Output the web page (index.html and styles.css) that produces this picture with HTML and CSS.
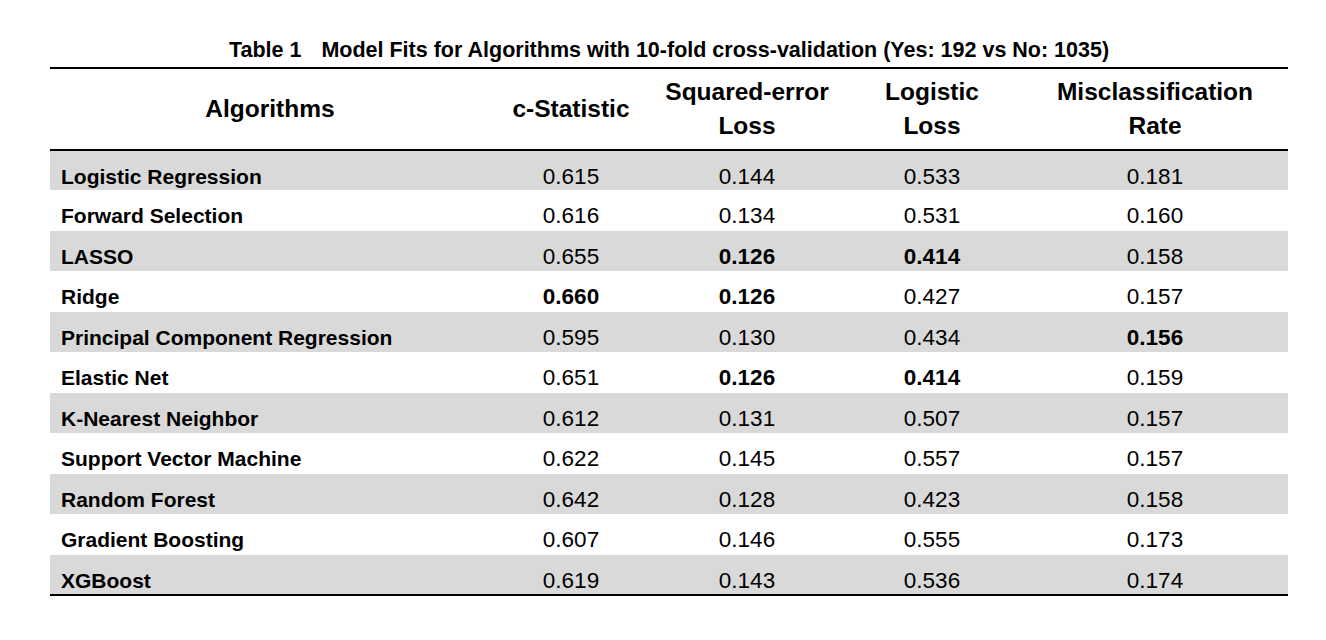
FILE: index.html
```html
<!DOCTYPE html>
<html>
<head>
<meta charset="utf-8">
<link rel="stylesheet" href="styles.css">
</head>
<body>
<div class="page">
  <div class="caption"><span class="label">Table 1</span>Model Fits for Algorithms with 10-fold cross-validation (Yes: 192 vs No: 1035)</div>
  <table class="fits">
    <colgroup>
      <col class="c1"><col class="c2"><col class="c3"><col class="c4"><col class="c5">
    </colgroup>
    <thead>
      <tr>
        <th>Algorithms</th>
        <th>c-Statistic</th>
        <th>Squared-error<br>Loss</th>
        <th>Logistic<br>Loss</th>
        <th>Misclassification<br>Rate</th>
      </tr>
    </thead>
    <tbody>
      <tr class="alt"><td class="name">Logistic Regression</td><td>0.615</td><td>0.144</td><td>0.533</td><td>0.181</td></tr>
      <tr><td class="name">Forward Selection</td><td>0.616</td><td>0.134</td><td>0.531</td><td>0.160</td></tr>
      <tr class="alt"><td class="name">LASSO</td><td>0.655</td><td class="b">0.126</td><td class="b">0.414</td><td>0.158</td></tr>
      <tr><td class="name">Ridge</td><td class="b">0.660</td><td class="b">0.126</td><td>0.427</td><td>0.157</td></tr>
      <tr class="alt"><td class="name">Principal Component Regression</td><td>0.595</td><td>0.130</td><td>0.434</td><td class="b">0.156</td></tr>
      <tr><td class="name">Elastic Net</td><td>0.651</td><td class="b">0.126</td><td class="b">0.414</td><td>0.159</td></tr>
      <tr class="alt"><td class="name">K-Nearest Neighbor</td><td>0.612</td><td>0.131</td><td>0.507</td><td>0.157</td></tr>
      <tr><td class="name">Support Vector Machine</td><td>0.622</td><td>0.145</td><td>0.557</td><td>0.157</td></tr>
      <tr class="alt"><td class="name">Random Forest</td><td>0.642</td><td>0.128</td><td>0.423</td><td>0.158</td></tr>
      <tr><td class="name">Gradient Boosting</td><td>0.607</td><td>0.146</td><td>0.555</td><td>0.173</td></tr>
      <tr class="alt"><td class="name">XGBoost</td><td>0.619</td><td>0.143</td><td>0.536</td><td>0.174</td></tr>
    </tbody>
  </table>
</div>
</body>
</html>
```
FILE: styles.css
```css
html, body {
  margin: 0;
  padding: 0;
  background: #ffffff;
}
body {
  font-family: "Liberation Sans", Arial, sans-serif;
  color: #000;
}
.page {
  padding: 38px 38px 0 50px;
}
.caption {
  width: 1238px;
  text-align: center;
  font-weight: bold;
  font-size: 21.5px;
  line-height: 24px;
  height: 29px;
  white-space: nowrap;
}
.caption .label {
  margin-right: 20px;
}
.fits {
  width: 1238px;
  border-collapse: collapse;
  table-layout: fixed;
  border-top: 2px solid #000;
  border-bottom: 2px solid #000;
}
.c1 { width: 440px; }
.c2 { width: 162px; }
.c3 { width: 190px; }
.c4 { width: 180px; }
.c5 { width: 266px; }
.fits th {
  font-weight: bold;
  font-size: 24.5px;
  line-height: 34px;
  height: 80px;
  padding: 0;
  text-align: center;
  vertical-align: middle;
  border-bottom: 2px solid #000;
}
.fits tbody tr {
  height: 41px;
}
.fits tbody tr.alt {
  height: 40px;
}
.fits td {
  padding: 12.5px 0 0 0;
  font-size: 22.5px;
  line-height: 26px;
  text-align: center;
  vertical-align: baseline;
}
.fits td.name {
  text-align: left;
  padding-left: 11px;
  font-weight: bold;
  font-size: 21px;
}
.fits td.b {
  font-weight: bold;
}
.fits tr.alt td {
  background: #d9d9d9;
}
```
